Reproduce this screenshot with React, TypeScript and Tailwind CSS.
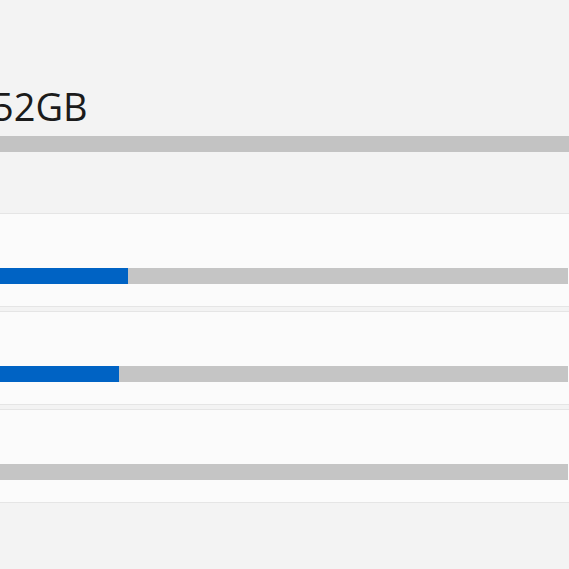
const rows = [
  { used: 128 },
  { used: 119 },
  { used: 0 },
];

export default function App() {
  return (
    <div className="min-h-[569px] w-[569px] overflow-hidden bg-[#f3f3f3] font-['Open_Sans','Noto_Sans',sans-serif]">
      <div className="pt-[87px]">
        <div className="-ml-[8px] text-[38px] leading-[38px] text-[#1b1b1b]">52GB</div>
      </div>
      <div className="mt-[11px] h-4 w-full bg-[#c3c3c3]" />

      <div className="mt-[61px] flex flex-col gap-1">
        {rows.map((row, i) => (
          <div
            key={i}
            className="-mx-2 h-[94px] rounded-md border border-[#e5e5e5] bg-[#fbfbfb] pl-[7px] pr-2 pt-[54px]"
          >
            <div className="flex h-4 bg-[#c5c5c5]">
              {row.used > 0 && (
                <div className="h-full bg-[#0063c4]" style={{ width: row.used }} />
              )}
            </div>
          </div>
        ))}
      </div>
    </div>
  );
}
